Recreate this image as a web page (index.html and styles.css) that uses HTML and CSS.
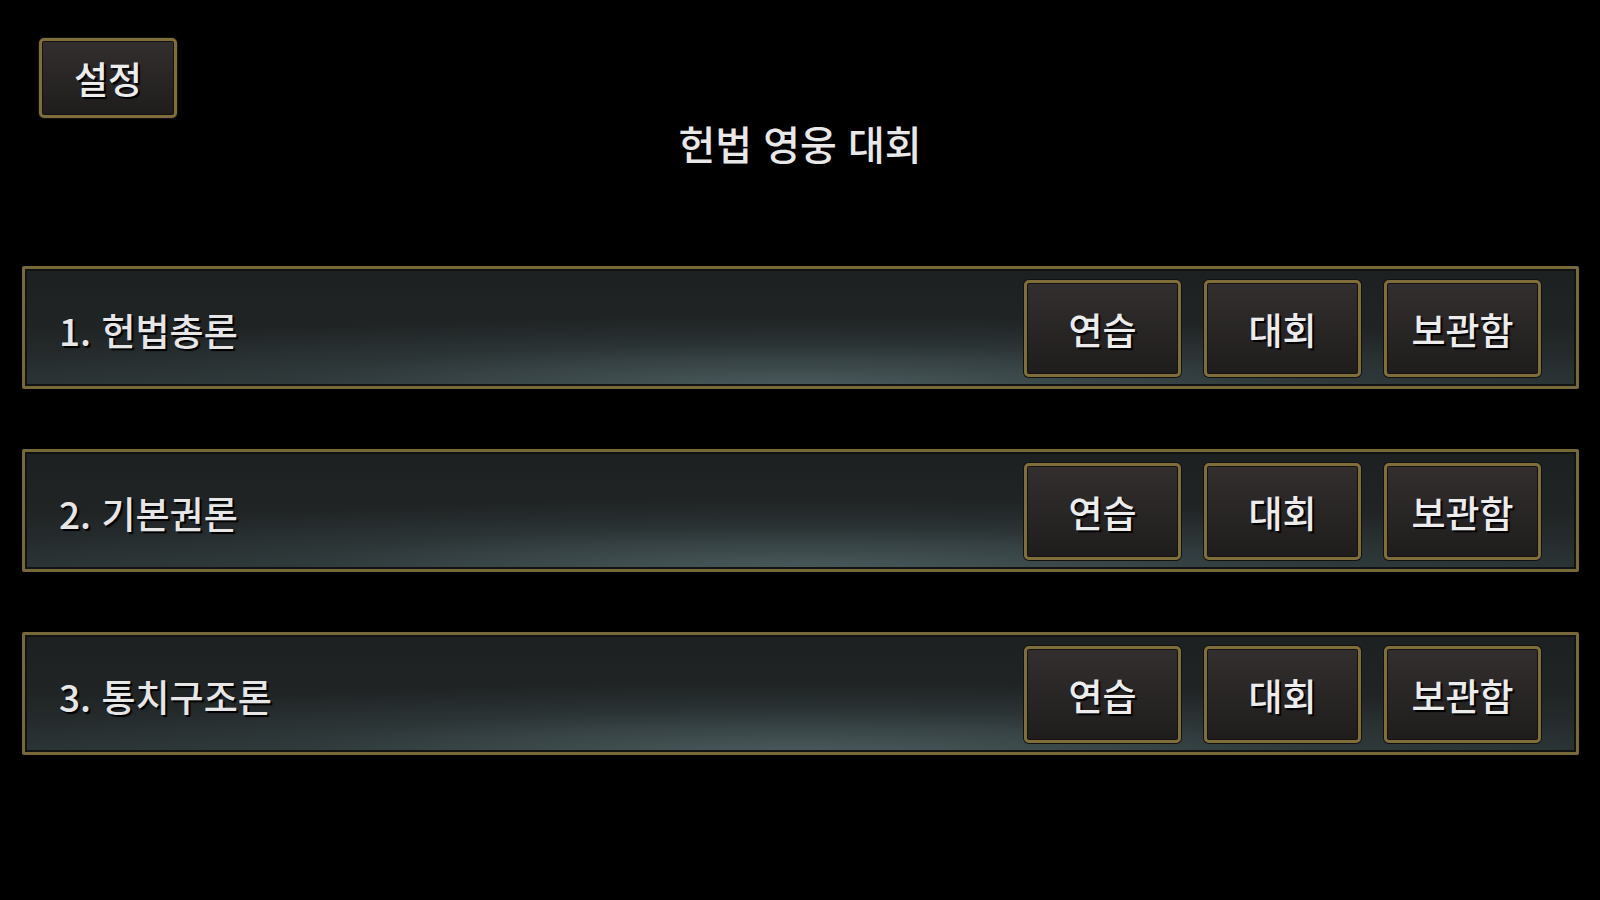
FILE: index.html
```html
<!DOCTYPE html>
<html lang="ko">
<head>
    <meta charset="UTF-8">
    <meta name="viewport" content="width=device-width, initial-scale=1.0">
    <title>헌법 영웅 대회</title>
    <link rel="stylesheet" href="styles.css">
</head>
<body>
<div class="header">
    <button class="btn settings-btn">설정</button>
</div>

<div class="title">헌법 영웅 대회</div>

<div class="list">

    <div class="row">
        <span class="row-label">1. 헌법총론</span>
        <div class="row-buttons">
            <button class="btn">연습</button>
            <button class="btn">대회</button>
            <button class="btn">보관함</button>
        </div>
    </div>

    <div class="row">
        <span class="row-label">2. 기본권론</span>
        <div class="row-buttons">
            <button class="btn">연습</button>
            <button class="btn">대회</button>
            <button class="btn">보관함</button>
        </div>
    </div>

    <div class="row">
        <span class="row-label">3. 통치구조론</span>
        <div class="row-buttons">
            <button class="btn">연습</button>
            <button class="btn">대회</button>
            <button class="btn">보관함</button>
        </div>
    </div>

</div>
</body>
</html>
```

FILE: styles.css
```css
body {
    margin: 0;
    padding: 0;
    background-color: #000000;
    color: #e6e6e6;
    font-family: "Noto Sans CJK KR", "Noto Sans", sans-serif;
}

.header {
    padding: 38px 0 0 39px;
    height: 80px;
}

.btn {
    font-family: inherit;
    font-size: 37px;
    font-weight: 500;
    color: #ececec;
    text-shadow: 2px 2px 1px #000000;
    background: linear-gradient(to bottom, #332f2f, #1f1c1c);
    border: 3px solid #7f6d3a;
    border-radius: 5px;
    box-shadow: 0 0 0 1px #111111, inset 0 0 0 1px #141212;
    padding: 0;
    cursor: pointer;
    width: 157px;
    height: 97px;
}

.settings-btn {
    width: 138px;
    height: 80px;
}

.title {
    text-align: center;
    font-size: 40px;
    font-weight: 500;
    line-height: 46px;
    margin-top: 2px;
    color: #e8e8e8;
}

.list {
    margin: 100px 21px 0 22px;
    display: flex;
    flex-direction: column;
    gap: 60px;
}

.row {
    height: 117px;
    display: flex;
    align-items: center;
    justify-content: space-between;
    padding: 0 35px 0 34px;
    border: 3px solid #77683a;
    border-radius: 2px;
    box-shadow: inset 0 0 0 2px #121414;
    background:
        radial-gradient(ellipse 55% 60% at 50% 100%, rgba(78, 96, 98, 0.85), rgba(60, 75, 78, 0.3) 60%, rgba(0, 0, 0, 0) 100%),
        linear-gradient(to bottom, #1d2021 0%, #202425 50%, #2a3233 100%);
}

.row-label {
    font-size: 37px;
    font-weight: 500;
    text-shadow: 2px 2px 1px #000000;
    padding-top: 4px;
}

.row-buttons {
    display: flex;
    gap: 23px;
    padding-top: 2px;
}
```
